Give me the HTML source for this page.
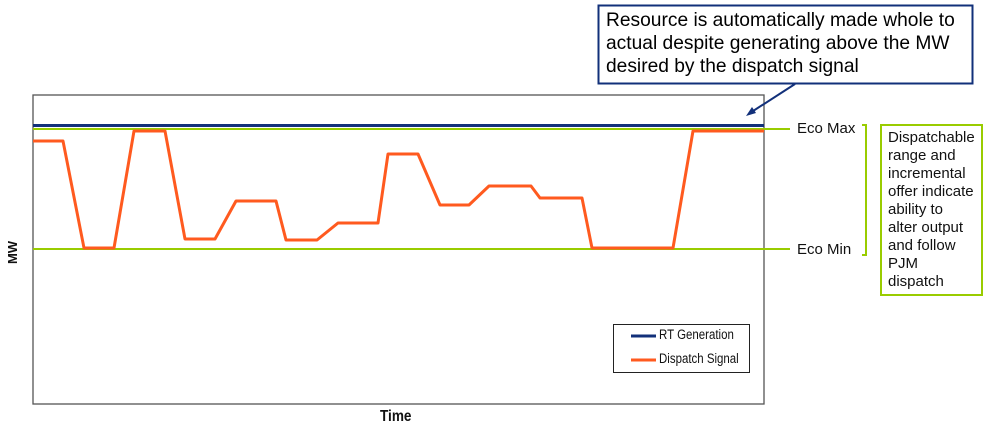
<!DOCTYPE html>
<html><head><style>
body{margin:0;width:1000px;height:436px;background:#fff;overflow:hidden;font-family:"Liberation Sans",sans-serif;position:relative}
.t{position:absolute;white-space:nowrap}
</style></head><body>
<svg width="1000" height="436" style="position:absolute;left:0;top:0">
<rect x="33" y="95" width="731" height="309" fill="none" stroke="#555" stroke-width="1.3"/>
<line x1="33" y1="129" x2="790" y2="129" stroke="#99cc00" stroke-width="2"/>
<line x1="33" y1="249" x2="790" y2="249" stroke="#99cc00" stroke-width="2"/>
<line x1="33" y1="125.5" x2="764" y2="125.5" stroke="#12307a" stroke-width="3"/>
<polyline fill="none" stroke="#ff5a1f" stroke-width="3" stroke-linejoin="round" points="33,141 63,141 84,248 114,248 134,131 165,131 185,239 215,239 236,201 276,201 286,240 317,240 338,223 378,223 388,154 418,154 440,205 469,205 489,186 531,186 540,198 582,198 592,248 673,248 693,131 764,131"/>
<rect x="613.5" y="324.5" width="136" height="48" fill="#fff" stroke="#222" stroke-width="1"/>
<line x1="631" y1="336" x2="656" y2="336" stroke="#12307a" stroke-width="3"/>
<line x1="631" y1="360" x2="656" y2="360" stroke="#ff5a1f" stroke-width="3"/>
<rect x="598.5" y="5.5" width="374" height="78" fill="#fff" stroke="#12307a" stroke-width="2"/>
<line x1="795" y1="84" x2="750" y2="113" stroke="#12307a" stroke-width="2"/>
<polygon points="746,116 752,107 756,113" fill="#12307a"/>
<polyline fill="none" stroke="#99cc00" stroke-width="2" points="862,125 866,125 866,255 862,255"/>
<rect x="881" y="125" width="101" height="170" fill="#fff" stroke="#99cc00" stroke-width="2"/>
</svg>
<div class="t" style="left:606px;top:9px;font-size:19.2px;line-height:23px;color:#000">Resource is automatically made whole to<br>actual despite generating above the MW<br>desired by the dispatch signal</div>
<div class="t" style="left:797px;top:120px;font-size:15px;color:#111">Eco Max</div>
<div class="t" style="left:797px;top:241px;font-size:15px;color:#111">Eco Min</div>
<div class="t" style="left:888px;top:129px;font-size:15px;line-height:18px;color:#111">Dispatchable<br>range and<br>incremental<br>offer indicate<br>ability to<br>alter output<br>and follow<br>PJM<br>dispatch</div>
<div class="t" style="left:659px;top:327px;font-size:13.5px;color:#111;transform:scaleX(0.85);transform-origin:left">RT Generation</div>
<div class="t" style="left:659px;top:351px;font-size:13.5px;color:#111;transform:scaleX(0.85);transform-origin:left">Dispatch Signal</div>
<div class="t" style="left:380px;top:408px;font-size:16px;font-weight:bold;color:#111;transform:scaleX(0.85);transform-origin:left">Time</div>
<div class="t" style="left:1px;top:245px;font-size:13px;font-weight:bold;color:#111;transform:rotate(-90deg);transform-origin:center">MW</div>
</body></html>
